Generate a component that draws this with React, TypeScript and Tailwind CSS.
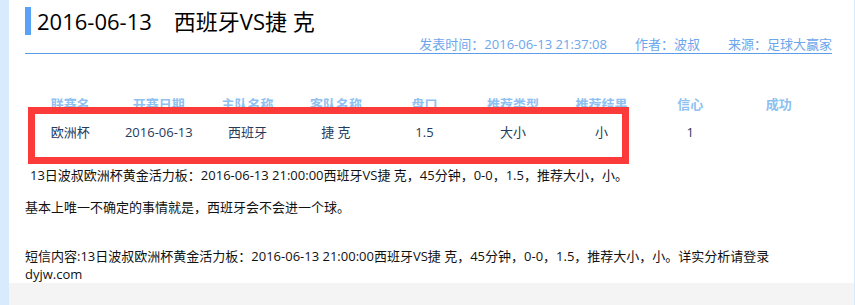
import React from 'react';

const font = { fontFamily: '"Open Sans", "Noto Sans CJK SC", sans-serif' };

const headers = ['联赛名', '开赛日期', '主队名称', '客队名称', '盘口', '推荐类型', '推荐结果', '信心', '成功'];
const row = ['欧洲杯', '2016-06-13', '西班牙', '捷 克', '1.5', '大小', '小', '1', ''];

export default function App() {
  return (
    <div className="flex h-[305px] w-[855px] bg-white overflow-hidden" style={font}>
      {/* left strip */}
      <div className="w-[9px] shrink-0 bg-[#d8ebfd]" />

      <div className="flex flex-col w-[845px]">
        <div className="h-[283px] pl-[16px] pr-[22px] pt-[7px]">
          {/* Title */}
          <div className="flex items-center gap-[6px] h-[28px]">
            <div className="w-[6px] h-[28px] bg-[#5aa2f6]" />
            <h1 className="text-[22px] leading-[28px] text-black whitespace-pre">2016-06-13　西班牙VS捷 克</h1>
          </div>

          {/* Meta */}
          <div className="flex justify-end gap-[28px] h-[19px] border-b border-[#5b9de8] text-[13px] leading-[18px] text-[#6ca6ec]">
            <span>发表时间：2016-06-13 21:37:08</span>
            <span>作者：波叔</span>
            <span>来源：足球大赢家</span>
          </div>

          {/* Table */}
          <div className="relative mt-[41px] ml-[1px] w-[797px]">
            <div className="grid grid-cols-9 text-[13px] leading-[18px] font-bold text-[#8ec0f0]">
              {headers.map((h, i) => (
                <div key={i} className="text-center">{h}</div>
              ))}
            </div>
            <div className="grid grid-cols-9 h-[38px] items-center text-[13px] leading-[18px] text-[#263a5c]">
              {row.map((c, i) => (
                <div key={i} className="text-center">{c}</div>
              ))}
            </div>
            {/* red highlight box */}
            <div className="absolute left-[2px] top-[12px] w-[601px] h-[57px] border-[7px] border-[#fb3a3a]" />
          </div>

          <p className="mt-[15px] pl-[5px] text-[13px] leading-[18px] text-[#111]">
            13日波叔欧洲杯黄金活力板：2016-06-13 21:00:00西班牙VS捷 克，45分钟，0-0，1.5，推荐大小，小。
          </p>
          <p className="mt-[14px] text-[13px] leading-[18px] text-[#111]">
            基本上唯一不确定的事情就是，西班牙会不会进一个球。
          </p>
          <p className="mt-[31px] text-[13px] leading-[18px] text-[#111]">
            短信内容:13日波叔欧洲杯黄金活力板：2016-06-13 21:00:00西班牙VS捷 克，45分钟，0-0，1.5，推荐大小，小。详实分析请登录
            <br />
            dyjw.com
          </p>
        </div>
        <div className="flex-1 bg-[#f4f4f4]" />
      </div>

      {/* right strip */}
      <div className="w-[1px] shrink-0 bg-[#d8ebfd]" />
    </div>
  );
}
